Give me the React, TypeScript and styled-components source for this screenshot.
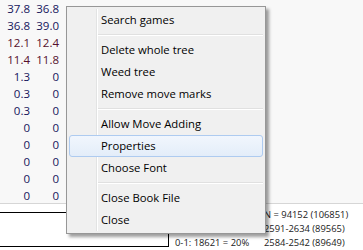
import React from "react";
import styled, { createGlobalStyle } from "styled-components";

const GlobalStyle = createGlobalStyle`
  html, body {
    margin: 0;
    padding: 0;
    background: #fff;
  }
  body {
    width: 363px;
    height: 250px;
    overflow: hidden;
    font-family: "Open Sans", "Noto Sans", sans-serif;
  }
`;

type Tone = "blue" | "red";

interface IRow {
  white: string;
  black: string;
  tone: Tone;
}

const rows: IRow[] = [
  { white: "37.8", black: "36.8", tone: "blue" },
  { white: "36.8", black: "39.0", tone: "blue" },
  { white: "12.1", black: "12.4", tone: "red" },
  { white: "11.4", black: "11.8", tone: "red" },
  { white: "1.3", black: "0", tone: "blue" },
  { white: "0.3", black: "0", tone: "blue" },
  { white: "0.3", black: "0", tone: "blue" },
  { white: "0", black: "0", tone: "blue" },
  { white: "0", black: "0", tone: "blue" },
  { white: "0", black: "0", tone: "blue" },
  { white: "0", black: "0", tone: "blue" },
  { white: "0", black: "0", tone: "blue" },
];

type MenuEntry = { label: string; active?: boolean } | "sep";

const menu: MenuEntry[] = [
  { label: "Search games" },
  "sep",
  { label: "Delete whole tree" },
  { label: "Weed tree" },
  { label: "Remove move marks" },
  "sep",
  { label: "Allow Move Adding" },
  { label: "Properties", active: true },
  { label: "Choose Font" },
  "sep",
  { label: "Close Book File" },
  { label: "Close" },
];

const toneColor: Record<Tone, string> = {
  blue: "#15155c",
  red: "#55102c",
};

const App: React.FC = () => {
  return (
    <Page>
      <GlobalStyle />
      <StatsList>
        {rows.map((row, i) => (
          <Row key={i} $color={toneColor[row.tone]}>
            <Cell>{row.white}</Cell>
            <Cell>{row.black}</Cell>
          </Row>
        ))}
      </StatsList>
      <Bottom>
        <NotationBox />
        <Summary>
          <span>1-0: 43108 = 46%</span>
          <span>N = 94152 (106851)</span>
          <span>½-½: 32423 = 34%</span>
          <span>2591-2634 (89565)</span>
          <span>0-1: 18621 = 20%</span>
          <span>2584-2542 (89649)</span>
        </Summary>
      </Bottom>
      <Menu>
        {menu.map((entry, i) =>
          entry === "sep" ? (
            <Separator key={i} />
          ) : (
            <MenuItem key={i} $active={entry.active}>
              {entry.label}
            </MenuItem>
          )
        )}
      </Menu>
    </Page>
  );
};

export default App;

const Page = styled.div`
  position: relative;
  width: 363px;
  height: 250px;
  display: flex;
  flex-direction: column;
`;

const StatsList = styled.div`
  height: 204px;
  box-sizing: border-box;
  background: #f8f8f8;
  border-bottom: 1px solid #d6d6d6;
`;

const Row = styled.div<{ $color: string }>`
  display: grid;
  grid-template-columns: 30px 29px;
  height: 17px;
  line-height: 17px;
  font-size: 11.5px;
  color: ${(p) => p.$color};
`;

const Cell = styled.div`
  text-align: right;
`;

const Bottom = styled.div`
  display: flex;
  margin-top: 4px;
`;

const NotationBox = styled.div`
  width: 169px;
  height: 35px;
  margin-top: 4px;
  box-sizing: border-box;
  border-top: 1px solid #000;
  border-right: 1px solid #000;
  border-bottom: 1px solid #000;
`;

const Summary = styled.div`
  display: grid;
  grid-template-columns: 89px auto;
  padding-left: 6px;
  font-size: 9.4px;
  line-height: 14px;
  color: #1a1a1a;
  white-space: nowrap;
`;

const Menu = styled.div`
  position: absolute;
  left: 66px;
  top: 6px;
  width: 200px;
  box-sizing: border-box;
  padding: 2px;
  background: #f0f0f0;
  border: 1px solid #979797;
  box-shadow: 3px 3px 3px rgba(0, 0, 0, 0.38);

  &::before {
    content: "";
    position: absolute;
    top: 2px;
    bottom: 2px;
    left: 29px;
    width: 1px;
    background: #e2e3e3;
    border-right: 1px solid #fff;
  }
`;

const MenuItem = styled.div<{ $active?: boolean }>`
  position: relative;
  height: 22px;
  box-sizing: border-box;
  padding-left: 31px;
  line-height: 20px;
  font-size: 11.3px;
  color: #000;
  border: 1px solid ${(p) => (p.$active ? "#aecbf0" : "transparent")};
  border-radius: 3px;
  background: ${(p) =>
    p.$active ? "linear-gradient(#f1f6fd, #e3edf9)" : "transparent"};
`;

const Separator = styled.div`
  height: 1px;
  margin: 3px 0 3px 28px;
  background: #e0e0e0;
  border-bottom: 1px solid #fff;
`;
